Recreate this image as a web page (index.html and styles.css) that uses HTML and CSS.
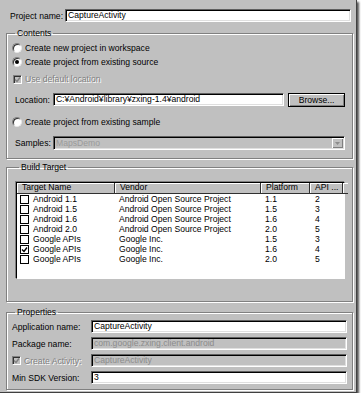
FILE: index.html
```html
<!DOCTYPE html>
<html lang="en">
<head>
  <meta charset="UTF-8" />
  <title>New Android Project</title>
  <link rel="stylesheet" href="styles.css">
</head>
<body>
  <div class="window">
    <div class="name-row">
      <span class="lbl name-lbl">Project name:</span>
      <div class="field name-field">CaptureActivity</div>
    </div>

    <fieldset class="group contents">
      <legend>Contents</legend>
      <div class="opt first"><span class="radio"></span>Create new project in workspace</div>
      <div class="opt"><span class="radio on"></span>Create project from existing source</div>
      <div class="opt check-opt disabled"><span class="check dis"><svg viewBox="0 0 7 7"><polyline points="1,3.5 3,5.5 6,1.5" /></svg></span>Use default location</div>
      <div class="loc-row">
        <span class="lbl loc-lbl">Location:</span>
        <div class="field loc-field">C:¥Android¥library¥zxing-1.4¥android</div>
        <button class="btn">Browse...</button>
      </div>
      <div class="opt sample-opt"><span class="radio"></span>Create project from existing sample</div>
      <div class="samples-row">
        <span class="lbl loc-lbl">Samples:</span>
        <div class="field combo dis-field">
          <span class="combo-text">MapsDemo</span>
          <span class="combo-btn"><svg viewBox="0 0 7 4"><polygon points="0,0 7,0 3.5,4" /></svg></span>
        </div>
      </div>
    </fieldset>

    <fieldset class="group build">
      <legend>Build Target</legend>
      <div class="table">
        <div class="thead">
          <span class="th">Target Name</span>
          <span class="th">Vendor</span>
          <span class="th">Platform</span>
          <span class="th">API ...</span>
          <span class="th filler"></span>
        </div>
        <div class="tbody" id="targets"></div>
      </div>
    </fieldset>

    <fieldset class="group props">
      <legend>Properties</legend>
      <div class="prop-row">
        <span class="lbl prop-lbl">Application name:</span>
        <div class="field prop-field">CaptureActivity</div>
      </div>
      <div class="prop-row">
        <span class="lbl prop-lbl">Package name:</span>
        <div class="field prop-field dis-field">com.google.zxing.client.android</div>
      </div>
      <div class="prop-row">
        <span class="lbl prop-lbl disabled"><span class="check dis"><svg viewBox="0 0 7 7"><polyline points="1,3.5 3,5.5 6,1.5" /></svg></span>Create Activity:</span>
        <div class="field prop-field dis-field">CaptureActivity</div>
      </div>
      <div class="prop-row">
        <span class="lbl prop-lbl">Min SDK Version:</span>
        <div class="field prop-field">3</div>
      </div>
    </fieldset>
  </div>

  <script>
    const targets = [
      { name: 'Android 1.1', vendor: 'Android Open Source Project', platform: '1.1', api: '2' },
      { name: 'Android 1.5', vendor: 'Android Open Source Project', platform: '1.5', api: '3' },
      { name: 'Android 1.6', vendor: 'Android Open Source Project', platform: '1.6', api: '4' },
      { name: 'Android 2.0', vendor: 'Android Open Source Project', platform: '2.0', api: '5' },
      { name: 'Google APIs', vendor: 'Google Inc.', platform: '1.5', api: '3' },
      { name: 'Google APIs', vendor: 'Google Inc.', platform: '1.6', api: '4', checked: true },
      { name: 'Google APIs', vendor: 'Google Inc.', platform: '2.0', api: '5' }
    ];

    const tbody = document.getElementById('targets');
    targets.forEach((t) => {
      const row = document.createElement('div');
      row.className = 'tr';
      const mark = t.checked ? '<svg viewBox="0 0 7 7"><polyline points="1,3.5 3,5.5 6,1.5" /></svg>' : '';
      row.innerHTML = `
        <span class="td td-name"><span class="check box">${mark}</span>${t.name}</span>
        <span class="td">${t.vendor}</span>
        <span class="td">${t.platform}</span>
        <span class="td td-api">${t.api}</span>
        <span class="td"></span>
      `;
      tbody.appendChild(row);
    });
  </script>
</body>
</html>
```

FILE: styles.css
```css
* {
  box-sizing: border-box;
}

body {
  margin: 0;
  background: #ffffff;
  font-family: 'Liberation Sans', Arial, sans-serif;
  font-size: 8.6px;
  color: #000;
}

.window {
  width: 357px;
  height: 393px;
  background: #c0c0c0;
  padding: 9px 3px 0 6px;
  border-right: 1px solid #404040;
  border-bottom: 1px solid #404040;
  box-shadow: 2px 2px 2px #555;
}

.lbl {
  display: flex;
  align-items: center;
  white-space: nowrap;
}

.disabled {
  color: #808080;
  text-shadow: 1px 1px 0 #fff;
}

/* sunken text field */
.field {
  height: 13px;
  line-height: 11px;
  padding: 0 2px;
  background: #fff;
  border: 1px solid;
  border-color: #606060 #fff #fff #606060;
  box-shadow: inset 1px 1px 0 #000, inset -1px -1px 0 #dfdfdf;
  white-space: nowrap;
  overflow: hidden;
}

.dis-field {
  background: #c0c0c0;
  color: #8c8c8c;
}

.name-row {
  display: flex;
  height: 13px;
}

.name-lbl {
  width: 55px;
  margin-left: 4px;
}

.name-field {
  flex: 1;
  margin-right: 2px;
}

/* group boxes */
.group {
  margin: 0;
  padding: 0;
  min-width: 0;
  border: 1px solid #808080;
  box-shadow: inset 1px 1px 0 #fff, 1px 1px 0 #fff;
}

.group legend {
  margin-left: 3px;
  padding: 0 2px;
  line-height: 10px;
}

.contents {
  margin-top: 6px;
  padding: 0 7px 8px 5px;
}

.build {
  margin-top: 3px;
  padding: 10px 7px 22px 9px;
}

.props {
  margin-top: 5px;
  padding: 3px 5px 5px 5px;
}

.opt {
  display: flex;
  align-items: center;
  height: 14px;
  gap: 3px;
}

.opt.first {
  margin-top: 3px;
}

.check-opt {
  margin-top: 3px;
  padding-left: 1px;
  gap: 3px;
}

.sample-opt {
  margin-top: 8px;
}

.radio {
  width: 10px;
  height: 10px;
  border-radius: 50%;
  background: #fff;
  border: 1px solid;
  border-color: #808080 #e8e8e8 #e8e8e8 #808080;
  box-shadow: inset 1px 1px 0 #303030;
  display: flex;
  align-items: center;
  justify-content: center;
}

.radio.on::after {
  content: '';
  width: 4px;
  height: 4px;
  border-radius: 50%;
  background: #000;
}

.check {
  width: 9px;
  height: 9px;
  flex: none;
  display: inline-flex;
  align-items: center;
  justify-content: center;
  border: 1px solid;
  border-color: #808080 #fff #fff #808080;
  box-shadow: inset 1px 1px 0 #303030;
}

.check svg {
  width: 7px;
  height: 7px;
  fill: none;
  stroke: #000;
  stroke-width: 1.4;
}

.check.dis {
  background: #c0c0c0;
  text-shadow: none;
}

.check.dis svg {
  stroke: #808080;
}

.loc-row,
.samples-row {
  display: flex;
  align-items: flex-start;
  height: 14px;
  padding-left: 3px;
}

.loc-row {
  margin-top: 7px;
}

.samples-row {
  margin-top: 7px;
}

.loc-lbl {
  width: 38px;
  height: 13px;
}

.loc-field {
  width: 232px;
}

.btn {
  margin-left: 4px;
  width: 57px;
  height: 14px;
  padding: 0;
  font-family: inherit;
  font-size: 8.6px;
  color: #000;
  background: #c0c0c0;
  border: 1px solid #000;
  box-shadow: inset 1px 1px 0 #fff, inset -1px -1px 0 #808080;
}

.combo {
  flex: 1;
  height: 14px;
  display: flex;
  align-items: center;
  justify-content: space-between;
  padding-right: 1px;
}

.combo-text {
  color: #9a9a9a;
}

.combo-btn {
  width: 11px;
  height: 10px;
  display: flex;
  align-items: center;
  justify-content: center;
  background: #c0c0c0;
  box-shadow: inset 1px 1px 0 #fff, inset -1px -1px 0 #808080;
}

.combo-btn svg {
  width: 5px;
  height: 3px;
  fill: #8c8c8c;
}

/* target table */
.table {
  height: 97px;
  background: #fff;
  border: 1px solid;
  border-color: #000 #fff #fff #000;
  box-shadow: -1px -1px 0 #808080;
}

.thead,
.tr {
  display: grid;
  grid-template-columns: 98px 146px 49px 33px 1fr;
}

.thead {
  height: 11px;
}

.th {
  line-height: 9px;
  padding-left: 5px;
  background: #c0c0c0;
  border-right: 1px solid #303030;
  border-bottom: 1px solid #303030;
  box-shadow: inset 1px 1px 0 #fff;
  white-space: nowrap;
  overflow: hidden;
}

.th.filler {
  border-right: none;
}

.tr {
  height: 10px;
}

.td {
  line-height: 10px;
  padding-left: 4px;
  white-space: nowrap;
  overflow: hidden;
}

.td-name {
  display: flex;
  align-items: center;
  gap: 4px;
  padding-left: 3px;
}

.td-api {
  padding-left: 5px;
}

.check.box {
  background: #fff;
  border-color: #000;
  box-shadow: none;
}

/* properties */
.prop-row {
  display: flex;
  height: 13px;
  margin-bottom: 4px;
}

.prop-row:last-child {
  margin-bottom: 0;
}

.prop-lbl {
  width: 79px;
  gap: 3px;
}

.prop-field {
  flex: 1;
}
```
